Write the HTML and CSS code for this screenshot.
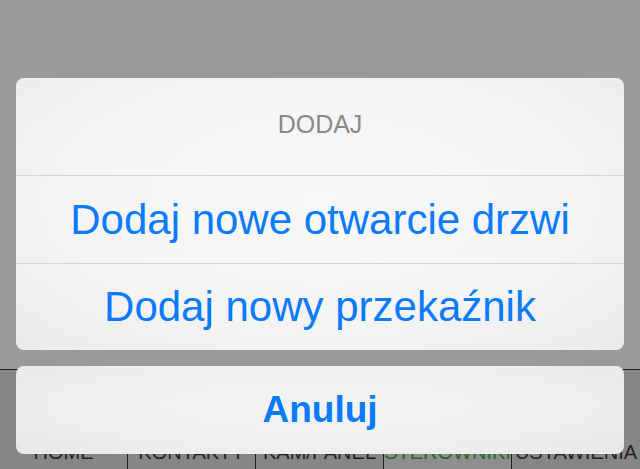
FILE: index.html
```html
<!DOCTYPE html>
<html lang="pl">
<head>
<meta charset="utf-8">
<title>Dodaj</title>
<link rel="stylesheet" href="styles.css">
</head>
<body>
<div class="page">
  <div class="content"></div>
  <nav class="tabbar">
    <div class="tab">HOME</div>
    <div class="tab">KONTAKTY</div>
    <div class="tab">KAM/PANEL</div>
    <div class="tab active">STEROWNIKI</div>
    <div class="tab">USTAWIENIA</div>
  </nav>
</div>
<div class="overlay">
  <div class="sheet">
    <div class="group">
      <div class="title">DODAJ</div>
      <div class="action">Dodaj nowe otwarcie drzwi</div>
      <div class="action">Dodaj nowy przekaźnik</div>
    </div>
    <div class="cancel">Anuluj</div>
  </div>
</div>
</body>
</html>
```
FILE: styles.css
```css
html, body {
  margin: 0;
  padding: 0;
}
body {
  width: 640px;
  height: 469px;
  overflow: hidden;
  position: relative;
  background: #9a9a9a;
  font-family: "Liberation Sans", Arial, sans-serif;
}
.page {
  height: 469px;
  display: flex;
  flex-direction: column;
}
.content {
  height: 369px;
  flex: none;
}
.tabbar {
  flex: 1;
  border-top: 1px solid #222;
  background: #868686;
  display: grid;
  grid-template-columns: repeat(5, 128px);
}
.tab {
  border-right: 1px solid #1e1e1e;
  padding-top: 72px;
  font-size: 20px;
  line-height: 20px;
  color: #222;
  text-align: center;
  white-space: nowrap;
  overflow: visible;
}
.tab:last-child {
  border-right: none;
}
.tab.active {
  background: #8e8e8e;
  color: #1d6b2c;
}
.overlay {
  position: absolute;
  inset: 0;
  display: flex;
  flex-direction: column;
  justify-content: flex-end;
  padding: 0 16px 15px;
}
.sheet {
  display: flex;
  flex-direction: column;
  gap: 16px;
}
.group {
  border-radius: 8px;
  overflow: hidden;
  background: radial-gradient(ellipse at 50% 45%, #f8f8f8 0%, #f4f4f4 60%, #ebebeb 100%);
  display: flex;
  flex-direction: column;
}
.title {
  height: 93px;
  padding-bottom: 4px;
  display: flex;
  align-items: center;
  justify-content: center;
  font-size: 25px;
  color: #8a8a8a;
  border-bottom: 1px solid #d4d4d4;
}
.action {
  height: 87px;
  display: flex;
  align-items: center;
  justify-content: center;
  font-size: 42px;
  line-height: 42px;
  color: #0a7bff;
}
.action + .action {
  height: 86px;
  border-top: 1px solid #d4d4d4;
}
.cancel {
  height: 88px;
  border-radius: 8px;
  background: radial-gradient(ellipse at 50% 45%, #f3f3f3 0%, #efefef 60%, #e8e8e8 100%);
  display: flex;
  align-items: center;
  justify-content: center;
  font-size: 37px;
  font-weight: bold;
  color: #0a7bff;
}
```
